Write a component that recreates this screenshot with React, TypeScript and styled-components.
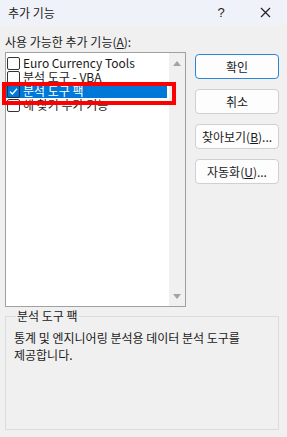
import styled, { createGlobalStyle } from 'styled-components'

const GlobalStyle = createGlobalStyle`
  html, body {
    margin: 0;
    padding: 0;
    background: #f0f0f0;
  }
  body {
    font-family: "Noto Sans CJK KR", "Noto Sans", sans-serif;
    font-size: 12px;
    color: #1a1a1a;
  }
`

interface AddIn {
  name: string,
  checked: boolean,
  selected?: boolean
}

const addIns: AddIn[] = [
  { name: 'Euro Currency Tools', checked: false },
  { name: '분석 도구 - VBA', checked: false },
  { name: '분석 도구 팩', checked: true, selected: true },
  { name: '해 찾기 추가 기능', checked: false }
]

const Window = styled.div`
  width: 287px;
  height: 437px;
  display: flex;
  flex-direction: column;
  background: #f0f0f0;
  overflow: hidden;
`

const TitleBar = styled.div`
  height: 25px;
  display: flex;
  align-items: center;
  background: #eff3f9;
  padding-left: 8px;
`

const Title = styled.span`
  flex: 1;
  font-size: 12px;
  line-height: 16px;
`

const TitleButton = styled.span`
  width: 44px;
  display: flex;
  justify-content: center;
  align-items: center;
  font-family: "Liberation Sans", sans-serif;
  font-size: 13px;
  color: #222;
`

const Body = styled.div`
  flex: 1;
  display: flex;
  flex-direction: column;
  padding: 0 8px 7px 5px;
`

const TopRow = styled.div`
  display: flex;
  gap: 9px;
`

const LeftColumn = styled.div`
  width: 181px;
  display: flex;
  flex-direction: column;
`

const ListLabel = styled.div`
  padding-top: 9px;
  height: 18px;
  line-height: 16px;
  white-space: nowrap;
`

const Underline = styled.span`
  text-decoration: underline;
`

const ListBox = styled.div`
  position: relative;
  height: 253px;
  border: 1px solid #a0a0a0;
  background: #ffffff;
  display: flex;
`

const Items = styled.div`
  flex: 1;
  padding: 3px 2px 0 0;
  display: flex;
  flex-direction: column;
`

const Item = styled.div<{ $selected?: boolean }>`
  height: 14px;
  display: flex;
  align-items: center;
  gap: 3px;
  padding-left: 1px;
  white-space: nowrap;
  line-height: 14px;
  background: ${p => (p.$selected ? '#0078d7' : 'transparent')};
  color: ${p => (p.$selected ? '#ffffff' : '#1a1a1a')};
`

const CheckBox = styled.span<{ $onBlue?: boolean }>`
  width: 11px;
  height: 11px;
  flex: none;
  border: 1px solid ${p => (p.$onBlue ? '#1c2c40' : '#333333')};
  border-radius: 2px;
  background: ${p => (p.$onBlue ? '#0078d7' : '#ffffff')};
  display: flex;
  align-items: center;
  justify-content: center;
`

const ScrollBar = styled.div`
  width: 16px;
  background: #f0f0f0;
  display: flex;
  flex-direction: column;
  justify-content: space-between;
  align-items: center;
  padding: 8px 0 7px;
`

const Arrow = styled.span<{ $down?: boolean }>`
  width: 0;
  height: 0;
  border-left: 4px solid transparent;
  border-right: 4px solid transparent;
  ${p => (p.$down
    ? 'border-top: 5px solid #a3a3a3;'
    : 'border-bottom: 5px solid #a3a3a3;')}
`

const Highlight = styled.div`
  position: absolute;
  left: -4px;
  top: 29px;
  width: 166px;
  height: 15px;
  border: 4px solid #ff0000;
  pointer-events: none;
`

const ButtonColumn = styled.div`
  width: 84px;
  padding-top: 29px;
  display: flex;
  flex-direction: column;
  gap: 10px;
`

const Button = styled.div<{ $primary?: boolean }>`
  height: 23px;
  border: 1px solid ${p => (p.$primary ? '#2b86d8' : '#d0d0d0')};
  border-radius: 4px;
  background: #fdfdfd;
  display: flex;
  align-items: center;
  justify-content: center;
  font-size: 12px;
  white-space: nowrap;
`

const GroupBox = styled.fieldset`
  flex: 1;
  margin: 2px 0 0 0;
  padding: 6px 8px 0 8px;
  border: 1px solid #dcdcdc;
  min-width: 0;
`

const Legend = styled.legend`
  padding: 0 1px;
  margin-left: 2px;
  font-size: 12px;
  line-height: 14px;
`

const Description = styled.p`
  margin: 0;
  line-height: 17px;
`

const Check = () => (
  <svg width="9" height="9" viewBox="0 0 9 9">
    <path d="M1 4.6 L3.4 7 L8 1.8" stroke="#ffffff" strokeWidth="1.3" fill="none" />
  </svg>
)

const App = () => {
  return (
    <Window>
      <GlobalStyle />
      <TitleBar>
        <Title>추가 기능</Title>
        <TitleButton>?</TitleButton>
        <TitleButton>
          <svg width="11" height="11" viewBox="0 0 11 11">
            <path d="M1 1 L10 10 M10 1 L1 10" stroke="#222" strokeWidth="1.2" />
          </svg>
        </TitleButton>
      </TitleBar>
      <Body>
        <TopRow>
          <LeftColumn>
            <ListLabel>사용 가능한 추가 기능(<Underline>A</Underline>):</ListLabel>
            <ListBox>
              <Items>
                {addIns.map(a => (
                  <Item key={a.name} $selected={a.selected}>
                    <CheckBox $onBlue={a.selected}>{a.checked && <Check />}</CheckBox>
                    {a.name}
                  </Item>
                ))}
              </Items>
              <ScrollBar>
                <Arrow />
                <Arrow $down />
              </ScrollBar>
              <Highlight />
            </ListBox>
          </LeftColumn>
          <ButtonColumn>
            <Button $primary>확인</Button>
            <Button>취소</Button>
            <Button>찾아보기(<Underline>B</Underline>)...</Button>
            <Button>자동화(<Underline>U</Underline>)...</Button>
          </ButtonColumn>
        </TopRow>
        <GroupBox>
          <Legend>분석 도구 팩</Legend>
          <Description>
            통계 및 엔지니어링 분석용 데이터 분석 도구를<br />제공합니다.
          </Description>
        </GroupBox>
      </Body>
    </Window>
  )
}

export default App
